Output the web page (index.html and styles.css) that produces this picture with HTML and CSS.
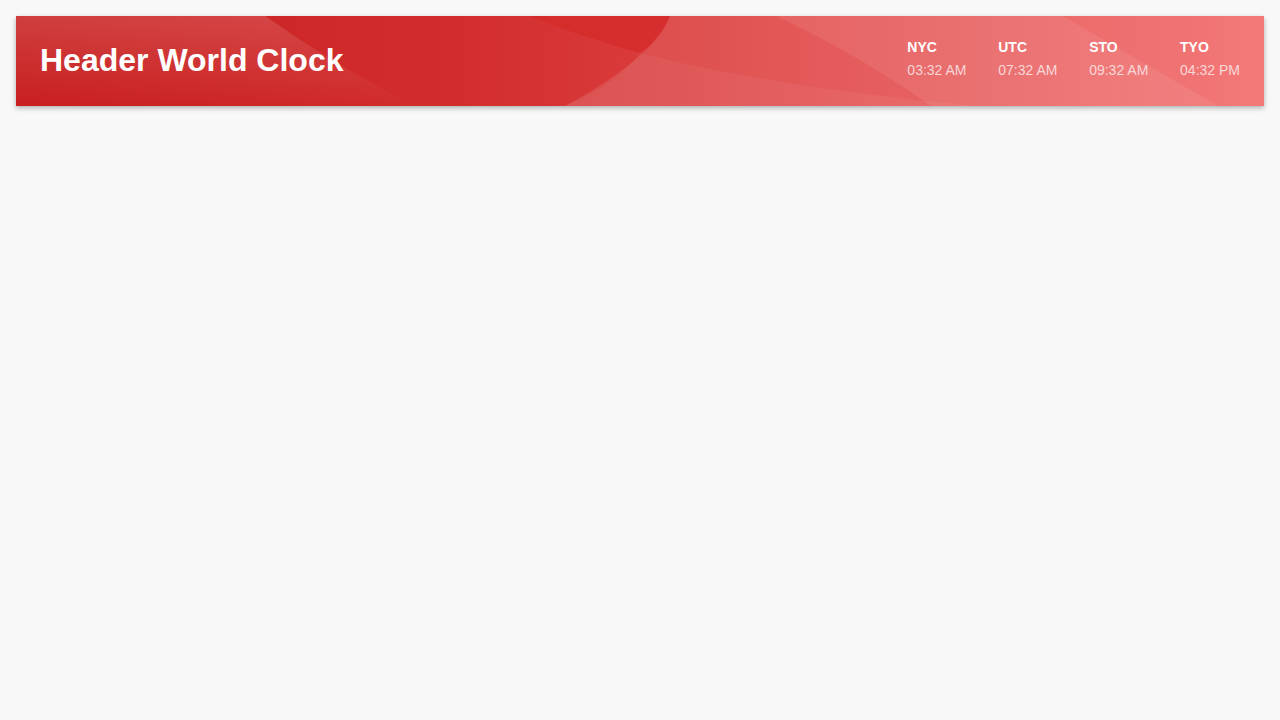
FILE: index.html
```html
<!DOCTYPE html>
<html lang="en">
<head>
<meta charset="utf-8">
<title>Header World Clock</title>
<link rel="stylesheet" href="styles.css">
</head>
<body>
<header class="header">
  <svg class="header-bg" viewBox="0 0 1248 90" preserveAspectRatio="none" aria-hidden="true">
    <defs>
      <linearGradient id="fadeA" x1="0" y1="0" x2="0" y2="1">
        <stop offset="0" stop-color="#ffffff" stop-opacity="0.14"/>
        <stop offset="1" stop-color="#ffffff" stop-opacity="0"/>
      </linearGradient>
    </defs>
    <path d="M0,0 H249 Q320,50 399,90 H0 Z" fill="url(#fadeA)"/>
    <path d="M512,0 H654 Q645,22 624,37 Q570,22 512,0 Z" fill="#d42a2a" fill-opacity="0.75"/>
    <path d="M654,0 Q640,40 549,90 H1248 V0 Z" fill="#ffffff" fill-opacity="0.1"/>
    <path d="M624,37 C720,62 850,80 960,90 H549 Q600,68 624,37 Z" fill="#ffffff" fill-opacity="0.05"/>
    <path d="M760,0 Q845,40 915,90 H1202 L1047,0 Z" fill="#ffffff" fill-opacity="0.08"/>
  </svg>
  <h1 class="title">Header World Clock</h1>
  <div class="clocks">
    <div class="clock"><span class="city">NYC</span><span class="time">03:32 AM</span></div>
    <div class="clock"><span class="city">UTC</span><span class="time">07:32 AM</span></div>
    <div class="clock"><span class="city">STO</span><span class="time">09:32 AM</span></div>
    <div class="clock"><span class="city">TYO</span><span class="time">04:32 PM</span></div>
  </div>
</header>
</body>
</html>
```

FILE: styles.css
```css
* { box-sizing: border-box; }

html, body {
  margin: 0;
  padding: 0;
}

body {
  background: #f8f8f8;
  font-family: "Liberation Sans", Arial, sans-serif;
  padding: 16px;
  min-height: 720px;
}

.header {
  position: relative;
  overflow: hidden;
  height: 90px;
  display: flex;
  align-items: center;
  justify-content: space-between;
  padding: 0 24px;
  background: linear-gradient(to right, #c81f1f 0%, #d22d2d 35%, #e04545 62%, #f26a6a 100%);
  box-shadow: 0 2px 5px rgba(0, 0, 0, 0.3);
  color: #fff;
}

.header-bg {
  position: absolute;
  inset: 0;
  width: 100%;
  height: 100%;
  z-index: 0;
}

.title {
  position: relative;
  z-index: 1;
  margin: 0 0 2px;
  font-size: 32px;
  font-weight: 700;
  line-height: 40px;
}

.clocks {
  position: relative;
  z-index: 1;
  display: flex;
  gap: 31.75px;
  margin-bottom: 5px;
}

.clock {
  display: flex;
  flex-direction: column;
  gap: 3px;
  font-size: 14px;
  line-height: 20px;
}

.city {
  font-weight: 700;
  color: #fff;
}

.time {
  color: rgba(255, 255, 255, 0.72);
}
```
